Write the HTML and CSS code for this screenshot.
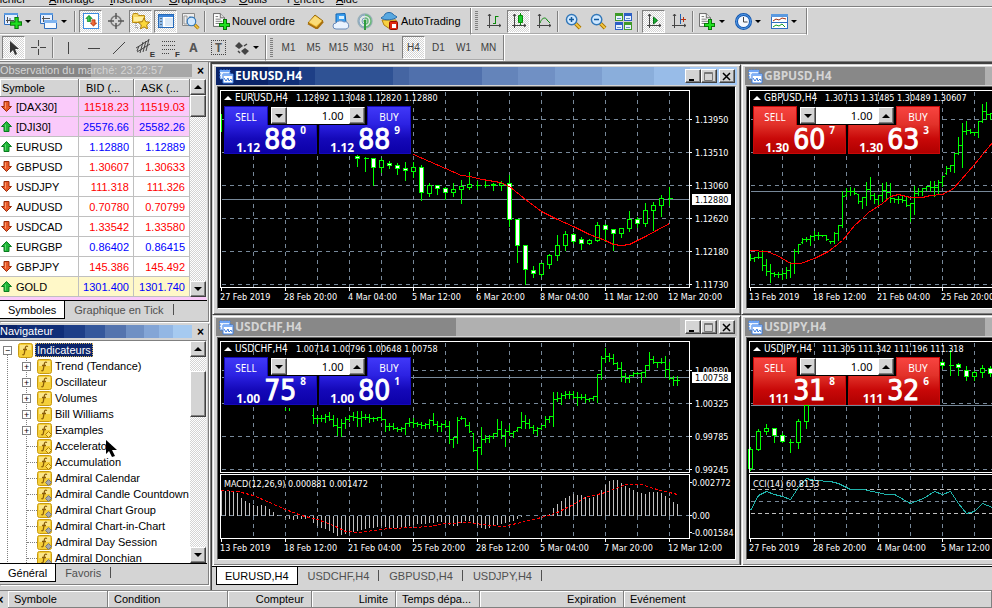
FILE: index.html
```html
<!DOCTYPE html>
<html lang="fr">
<head>
<meta charset="utf-8">
<title>EURUSD,H4</title>
<link rel="stylesheet" href="styles.css">
</head>
<body>
<svg class="sprite" aria-hidden="true">
  <symbol id="i-plus" viewBox="0 0 11 11"><path d="M4 0h4v4h3v4H8v3H4V8H0V4h4z" fill="#087a08"/><path d="M5 1h2v4h3v2H7v3H5V7H1V5h4z" fill="#20e020"/></symbol>
  <symbol id="i-page" viewBox="0 0 14 16"><path d="M.5.5h8l5 5v10H.5z" fill="#fff" stroke="#555"/><path d="M8.500.5v5h5" fill="#ddd" stroke="#555"/><path d="M3 4h3M3 7h6M3 9.500h8M3 12h8" stroke="#666"/></symbol>
  <symbol id="i-up" viewBox="0 0 11 11"><path d="M5.500.5l5 5h-2.500v5h-5v-5h-2.500z" fill="#1fb438" stroke="#0b7a20"/><path d="M4.500 3.500v6" stroke="#5fdc72"/></symbol>
  <symbol id="i-down" viewBox="0 0 11 11"><path d="M5.500 10.500l5-5h-2.500v-5h-5v5h-2.500z" fill="#e8592a" stroke="#9a2c08"/><path d="M4.500 1.500v6" stroke="#ff9a6a"/></symbol>
  <symbol id="i-f" viewBox="0 0 15 15"><rect x=".5" y=".5" width="14" height="14" rx="2" fill="#f5cf3a" stroke="#c89a10"/><path d="M2 2h11v5H2z" fill="#fbe588"/><path d="M10 3.500c-2-1-2.500 0-2.800 2L6.300 10.500c-.3 1.500-1 1.500-2 1M5 6.500h4" fill="none" stroke="#8a5c08" stroke-width="1.300"/></symbol>
  <symbol id="i-fy" viewBox="0 0 15 15"><use href="#i-f"/><path d="M11.500 8.500l3 3-3 3-3-3z" fill="#ffe36a" stroke="#b07c00"/></symbol>
  <symbol id="i-fg" viewBox="0 0 15 15"><use href="#i-f"/><path d="M11.500 8.500l3 3-3 3-3-3z" fill="#a8a8a8" stroke="#777"/></symbol>
  <symbol id="i-win" viewBox="0 0 15 15"><path d="M1 1h10v9H1z" fill="#e8f2ff" stroke="#3b7de0" stroke-dasharray="2 1"/><path d="M1 1h10v2H1z" fill="#6fa5f5"/><path d="M4 5h10v9H4z" fill="#fff" stroke="#3b7de0"/><path d="M4 5h10v2H4z" fill="#7fb0f8"/><path d="M5 9l2 3 2-3 1 3 2-2 1 2" fill="none" stroke="#3b7de0"/></symbol>
  <symbol id="i-axes" viewBox="0 0 16 16"><path d="M3.500 1v14M1 12.500h14M2 3l1.500-2L5 3M13 11l2 1.500-2 1.500" fill="none" stroke="#444"/></symbol>
  <symbol id="i-lens" viewBox="0 0 18 18"><path d="M11 11l5 5" stroke="#a87400" stroke-width="4"/><path d="M11 11l5 5" stroke="#f5c842" stroke-width="2"/><circle cx="7" cy="7" r="5.500" fill="#cfe8ff" stroke="#3277b8" stroke-width="1.500"/></symbol>
</svg>

<div class="app">
  <nav class="menubar" aria-label="Menu">
    <a href="#" class="m1"><u>F</u>ichier</a><a href="#" class="m2"><u>A</u>ffichage</a><a href="#" class="m3"><u>I</u>nsertion</a><a href="#" class="m4"><u>G</u>raphiques</a><a href="#" class="m5"><u>O</u>utils</a><a href="#" class="m6">F<u>e</u>nêtre</a><a href="#" class="m7"><u>A</u>ide</a>
  </nav>

  <div class="toolbar-row">
    <div class="toolbar">
      <button class="tb drop" aria-label="Nouveau graphique"><svg width="18" height="16"><path d="M.5.500h13v11H.5z" fill="#e6f0ff" stroke="#2f6fc0"/><path d="M0 0h14v2H0z" fill="#5b9ae0"/><path d="M3.500 4v6M2 7.500h8M6 5v3" fill="none" stroke="#555"/><use href="#i-plus" x="6" y="4" width="12" height="12"/></svg><i class="caret"></i></button>
      <button class="tb drop" aria-label="Profils"><svg width="18" height="17"><path d="M.5.500h12v10H.5z" fill="#e6f0ff" stroke="#2f6fc0"/><path d="M0 0h13v2H0z" fill="#5b9ae0"/><path d="M3.500 3v6M2 5.500h8" stroke="#555"/><path d="M4.500 7.500h12v8h-12z" fill="#f4f9ff" stroke="#2f6fc0"/><path d="M4 7h13v3H4z" fill="#7fb4f0"/></svg><i class="caret"></i></button>
      <span class="sep"></span>
      <button class="tb on" aria-label="Observation du marché"><svg width="16" height="16"><rect x=".5" y=".5" width="15" height="15" fill="#fff" stroke="#3d8be0"/><use href="#i-up" x="2" y="2" width="8" height="7"/><use href="#i-down" x="7" y="6" width="7" height="8"/></svg></button>
      <button class="tb" aria-label="Fenêtre de données"><svg width="16" height="16"><circle cx="8" cy="8" r="5" fill="none" stroke="#777" stroke-width="1.500"/><path d="M8 0v6M8 10v6M0 8h6M10 8h6" stroke="#555" stroke-width="1.500"/></svg></button>
      <button class="tb on" aria-label="Navigateur"><svg width="18" height="16"><path d="M.5 9.500v-7l1-2h4l1 2h6v7z" fill="#f7d860" stroke="#b88a10"/><path d="M2 4h9v4H2z" fill="#ffefa0"/><path d="M4 10v5h3" fill="none" stroke="#666" stroke-dasharray="1 1"/><path d="M12 5l1.700 3.700 4 .5-3 2.700.8 4-3.500-2-3.500 2 .8-4-3-2.700 4-.5z" fill="#fcd838" stroke="#a87808"/></svg></button>
      <button class="tb on" aria-label="Terminal"><svg width="16" height="16"><rect x=".5" y="1.500" width="15" height="13" fill="#fff" stroke="#2569b8"/><path d="M1 2h4v12H1z" fill="#8db9e8"/><path d="M1 2h14v2H1z" fill="#3b83d8"/><path d="M7 6h8M7 8h8M7 10h8M7 12h8" stroke="#b8d4f0"/><path d="M3 5v9" stroke="#222" stroke-dasharray="1 2"/></svg></button>
      <button class="tb" aria-label="Testeur de stratégie"><svg width="18" height="18"><path d="M.5 1.500h12v12H.5z" fill="#eee" stroke="#888"/><path d="M2 4h3v8H2zM8 4v8M10 6v5" fill="none" stroke="#999"/><use href="#i-lens" x="4" y="4" width="14" height="14"/></svg></button>
      <span class="sep"></span>
      <button class="tb text order"><svg width="17" height="17"><use href="#i-page" x="0" y="0" width="12" height="14"/><use href="#i-plus" x="6" y="6" width="11" height="11"/></svg>Nouvel ordre</button>
      <button class="tb" aria-label="MetaEditor"><svg width="17" height="15"><path d="M1 9l7-8 8 6-6 8z" fill="#f0b828" stroke="#986808"/><path d="M2 8l6-6 7 5-6 5z" fill="#fbdc78"/><path d="M1 9.500l9 5 6-7" fill="none" stroke="#a87010" stroke-width="2"/></svg></button>
      <button class="tb" aria-label="Hébergement"><svg width="18" height="17"><path d="M4 1l9-.5 1 9H4z" fill="#3b9ff0" stroke="#1264b0"/><path d="M7 3h5v3H7z" fill="#d8f0ff"/><path d="M4 16a3 3 0 010-6 5 4 0 018-1 3.500 3.500 0 012 7z" fill="#eaf3ff" stroke="#6a8ab8"/></svg></button>
      <button class="tb" aria-label="Signaux"><svg width="17" height="17"><circle cx="8" cy="8" r="7" fill="#dfe8e4" stroke="#98b0b8" stroke-width="1.500"/><path d="M8 2a6 6 0 000 12M8 5a3 3 0 000 6" fill="none" stroke="#7b9cc0"/><path d="M8 2a6 6 0 010 12M8 5a3 3 0 010 6" fill="none" stroke="#68b878" stroke-width="1.500"/><path d="M8 8v9" stroke="#2f9c40" stroke-width="2"/><circle cx="8" cy="8" r="1.500" fill="#2f9c40"/></svg></button>
      <button class="tb text auto"><svg width="18" height="18"><path d="M1 8h14l1 4-7 5-6-4z" fill="#f8d040" stroke="#b08010"/><path d="M0 6c2-2 3-1 4-4 2-2 6-2 8 0 1 2 2 1 4 3-3 3-12 4-16 1z" fill="#58a8e0" stroke="#2a6ca8"/><rect x="8.500" y="9.500" width="8" height="8" rx="1" fill="#e02810" stroke="#901000"/><path d="M11 12h4v4h-4z" fill="#fff"/></svg>AutoTrading</button>
    </div>
    <div class="toolbar">
      <span class="grip"></span>
      <button class="tb" aria-label="Barres"><svg width="16" height="16"><use href="#i-axes" width="16" height="16"/><path d="M9.500 3v8M9.500 3.500h3M7 10.500h3" stroke="#0a8a0a"/></svg></button>
      <button class="tb on" aria-label="Chandeliers"><svg width="16" height="16"><use href="#i-axes" width="16" height="16"/><path d="M9.500 0v12" stroke="#0a8a0a"/><path d="M7.500 2.500h4v7h-4z" fill="#18d030" stroke="#0a8a0a"/></svg></button>
      <button class="tb" aria-label="Ligne"><svg width="16" height="16"><use href="#i-axes" width="16" height="16"/><path d="M4 10c2-6 6-6 7-3l3 3" fill="none" stroke="#0a8a0a"/></svg></button>
      <span class="sep"></span>
      <button class="tb" aria-label="Zoom avant"><svg width="17" height="17"><use href="#i-lens" width="17" height="17"/><path d="M4 6.500h5M6.500 4v5" stroke="#125a9c" stroke-width="1.500"/></svg></button>
      <button class="tb" aria-label="Zoom arrière"><svg width="17" height="17"><use href="#i-lens" width="17" height="17"/><path d="M4 6.500h5" stroke="#125a9c" stroke-width="1.500"/></svg></button>
      <button class="tb" aria-label="Mosaïque"><svg width="17" height="17"><path d="M0 0h8v8H0zM9 9h8v8H9z" fill="#3e9a28"/><path d="M9 0h8v8H9zM0 9h8v8H0z" fill="#2c5fc4"/><path d="M1 3h6v4H1zM10 3h6v4h-6zM1 12h6v4H1zM10 12h6v4h-6z" fill="#e8f2ff"/><path d="M2 5.500h4M11 5.500h4M2 14.500h4M11 14.500h4" stroke="#6a94c8"/></svg></button>
      <span class="sep"></span>
      <button class="tb on" aria-label="Défilement"><svg width="16" height="16"><use href="#i-axes" width="16" height="16"/><path d="M7.500 4l4 3.500-4 3.500z" fill="#18b030" stroke="#087018"/></svg></button>
      <button class="tb" aria-label="Décalage"><svg width="16" height="16"><use href="#i-axes" width="16" height="16"/><path d="M9.500 1v10" stroke="#2060b0"/><path d="M10 6.500h5M12.500 4v5" stroke="#b83010"/></svg></button>
      <span class="sep"></span>
      <button class="tb drop" aria-label="Indicateurs"><svg width="17" height="17"><use href="#i-page" x="0" y="0" width="12" height="14"/><use href="#i-plus" x="5" y="6" width="11" height="11"/></svg><i class="caret"></i></button>
      <button class="tb drop" aria-label="Périodes"><svg width="17" height="17"><circle cx="8.500" cy="8.500" r="7" fill="#f4f8ff" stroke="#1458b0" stroke-width="3"/><circle cx="8.500" cy="8.500" r="7" fill="none" stroke="#5aa0ec"/><path d="M8.500 4v5h4" fill="none" stroke="#444"/></svg><i class="caret"></i></button>
      <button class="tb drop" aria-label="Modèles"><svg width="17" height="15"><rect x=".5" y=".5" width="16" height="14" fill="#fff" stroke="#2f6fc0"/><path d="M0 0h17v3H0z" fill="#5b9ae0"/><path d="M0 8.500h17" stroke="#2f6fc0"/><path d="M2 7l3-2 3 1 3-2 4 1" fill="none" stroke="#a03010"/><path d="M2 13l3-2 3 1 3-2 3 3" fill="none" stroke="#18a028"/></svg><i class="caret"></i></button>
    </div>
  </div>

  <div class="toolbar-row">
    <div class="toolbar tools">
      <button class="tb on" aria-label="Curseur"><svg width="12" height="16"><path d="M2 1v12l3-3 2 5 2-1-2-5h4z" fill="#333"/></svg></button>
      <button class="tb" aria-label="Réticule"><svg width="16" height="16"><path d="M7.500 0v6M7.500 9v6M0 7.500h6M9 7.500h6" stroke="#444"/></svg></button>
      <span class="sep"></span>
      <button class="tb" aria-label="Ligne verticale"><svg width="14" height="14"><path d="M6.500 1v12" stroke="#444"/></svg></button>
      <button class="tb" aria-label="Ligne horizontale"><svg width="14" height="14"><path d="M1 7.500h12" stroke="#444"/></svg></button>
      <button class="tb" aria-label="Ligne de tendance"><svg width="14" height="14"><path d="M1 13L13 1" stroke="#444"/></svg></button>
      <button class="tb mark" aria-label="Canal équidistant"><svg width="16" height="18"><path d="M0 9l13-8M1 13l13-8M4 14L7 3M7 13l3-11M10 12l3-12M1 12l2-5" stroke="#444"/></svg><b>E</b></button>
      <button class="tb mark" aria-label="Fibonacci"><svg width="16" height="18"><path d="M1 2.500h14M1 6.500h14M1 10.500h14M1 14.500h8" stroke="#444" stroke-dasharray="1 1"/></svg><b>F</b></button>
      <button class="tb letter">A</button>
      <button class="tb label">T</button>
      <button class="tb drop" aria-label="Flèches"><svg width="16" height="16"><path d="M5 2l4 4-4 3-4-3zM11 8l4 3-4 4-4-4z" fill="#444"/><path d="M4 11l2 2M10 6l3-2" fill="none" stroke="#444" stroke-width="1.500"/></svg><i class="caret"></i></button>
    </div>
    <div class="toolbar periods">
      <span class="grip"></span>
      <button class="tb">M1</button><button class="tb">M5</button><button class="tb">M15</button><button class="tb">M30</button><button class="tb">H1</button><button class="tb on">H4</button><button class="tb">D1</button><button class="tb">W1</button><button class="tb">MN</button>
    </div>
  </div>

  <div class="workspace">
    <aside class="sidebar">
      <section class="panel market">
        <header class="panel-title idle"><h2>Observation du marché: 23:22:57</h2><button class="close" aria-label="Fermer">×</button></header>
        <div class="scroll-area">
          <table>
            <thead><tr><th>Symbole</th><th class="num">BID (...</th><th class="num">ASK (...</th></tr></thead>
            <tbody>
              <tr class="pink down"><td><svg><use href="#i-down"/></svg>[DAX30]</td><td>11518.23</td><td>11519.03</td></tr>
              <tr class="pink up"><td><svg><use href="#i-up"/></svg>[DJI30]</td><td>25576.66</td><td>25582.26</td></tr>
              <tr class="up"><td><svg><use href="#i-up"/></svg>EURUSD</td><td>1.12880</td><td>1.12889</td></tr>
              <tr class="down"><td><svg><use href="#i-down"/></svg>GBPUSD</td><td>1.30607</td><td>1.30633</td></tr>
              <tr class="down"><td><svg><use href="#i-down"/></svg>USDJPY</td><td>111.318</td><td>111.326</td></tr>
              <tr class="down"><td><svg><use href="#i-down"/></svg>AUDUSD</td><td>0.70780</td><td>0.70799</td></tr>
              <tr class="down"><td><svg><use href="#i-down"/></svg>USDCAD</td><td>1.33542</td><td>1.33580</td></tr>
              <tr class="up"><td><svg><use href="#i-up"/></svg>EURGBP</td><td>0.86402</td><td>0.86415</td></tr>
              <tr class="down"><td><svg><use href="#i-down"/></svg>GBPJPY</td><td>145.386</td><td>145.492</td></tr>
              <tr class="gold up"><td><svg><use href="#i-up"/></svg>GOLD</td><td>1301.400</td><td>1301.740</td></tr>
            </tbody>
          </table>
          <div class="scrollbar"><button aria-label="Haut"><i class="tri up"></i></button><span class="thumb"></span><button class="end" aria-label="Bas"><i class="tri"></i></button></div>
        </div>
        <div class="tabs"><button class="tab on">Symboles</button><button class="tab">Graphique en Tick</button></div>
      </section>

      <section class="panel navigator">
        <header class="panel-title live"><h2>Navigateur</h2><button class="close" aria-label="Fermer">×</button></header>
        <div class="scroll-area">
          <ul class="tree">
            <li class="root"><i class="box">−</i><svg><use href="#i-f"/></svg><span class="sel">Indicateurs</span></li>
            <li><i class="box">+</i><svg><use href="#i-f"/></svg>Trend (Tendance)</li>
            <li><i class="box">+</i><svg><use href="#i-f"/></svg>Oscillateur</li>
            <li><i class="box">+</i><svg><use href="#i-f"/></svg>Volumes</li>
            <li><i class="box">+</i><svg><use href="#i-f"/></svg>Bill Williams</li>
            <li><i class="box">+</i><svg><use href="#i-fy"/></svg>Examples</li>
            <li><i class="leaf"></i><svg><use href="#i-fy"/></svg>Accelerator<svg class="pointer" viewBox="0 0 11 17"><path d="M0 0v14l3-3 3 6 3-1-3-6h5z"/></svg></li>
            <li><i class="leaf"></i><svg><use href="#i-fy"/></svg>Accumulation</li>
            <li><i class="leaf"></i><svg><use href="#i-fg"/></svg>Admiral Calendar</li>
            <li><i class="leaf"></i><svg><use href="#i-fg"/></svg>Admiral Candle Countdown</li>
            <li><i class="leaf"></i><svg><use href="#i-fg"/></svg>Admiral Chart Group</li>
            <li><i class="leaf"></i><svg><use href="#i-fg"/></svg>Admiral Chart-in-Chart</li>
            <li><i class="leaf"></i><svg><use href="#i-fg"/></svg>Admiral Day Session</li>
            <li><i class="leaf"></i><svg><use href="#i-fg"/></svg>Admiral Donchian</li>
          </ul>
          <div class="scrollbar"><button aria-label="Haut"><i class="tri up"></i></button><span class="thumb low"></span><button class="end" aria-label="Bas"><i class="tri"></i></button></div>
        </div>
        <div class="tabs"><button class="tab on">Général</button><button class="tab">Favoris</button></div>
      </section>
    </aside>

    <main class="desk">
      <div class="mdi" id="mdi"></div>
      <div class="tabs chart-tabs"><button class="tab on">EURUSD,H4</button><button class="tab">USDCHF,H4</button><button class="tab">GBPUSD,H4</button><button class="tab">USDJPY,H4</button></div>
    </main>
  </div>

  <div class="terminal">
    <button class="close" aria-label="Fermer">×</button>
    <table><thead><tr><th class="c1">Symbole</th><th class="c2">Condition</th><th class="c3 num">Compteur</th><th class="c4 num">Limite</th><th class="c5">Temps dépa...</th><th class="c6 num">Expiration</th><th>Evénement</th></tr></thead></table>
  </div>
</div>
<script src="charts.js"></script>
</body>
</html>
```

FILE: styles.css
```css
:root {
  --face: #d4d4d4;
  --shade: #808080;
  --dark: #404040;
  --dither: repeating-conic-gradient(#fff 0 25%, #d4d4d4 0 50%) 0 0 / 2px 2px;
  --ui: "Liberation Sans", sans-serif;
  --wide: "Noto Sans", "DejaVu Sans Condensed", sans-serif;
}
* { box-sizing: border-box; }
body { margin: 0; background: var(--face); color: #000; font: 11px/14px var(--ui); overflow: hidden; }
button { font: inherit; color: inherit; background: none; border: 0; padding: 0; margin: 0; }
.sprite { position: absolute; width: 0; height: 0; }
.app { height: 100vh; display: flex; flex-direction: column; }

.menubar { height: 8px; flex: none; overflow: hidden; display: flex; align-items: flex-end; padding-bottom: 1px; border-bottom: 1px solid #fff; box-shadow: inset 0 -1px var(--shade); }
.menubar a { color: #000; text-decoration: none; flex: none; }
.menubar .m1 { width: 56px; margin-left: -7px; }
.menubar .m2 { width: 61px; }
.menubar .m3 { width: 59px; }
.menubar .m4 { width: 70px; }
.menubar .m5 { width: 48px; }
.menubar .m6 { width: 49px; }

.toolbar-row { display: flex; height: 27px; flex: none; }
.toolbar-row + .toolbar-row { height: 26px; }
.toolbar { display: flex; align-items: center; gap: 2px; padding: 0 3px 0 2px; border-right: 1px solid var(--shade); border-bottom: 1px solid #fff; box-shadow: 1px 0 #fff, inset 0 -1px #aaa; }
.toolbar + .toolbar { padding-left: 4px; }
.tb { width: 23px; height: 23px; display: flex; align-items: center; justify-content: center; flex: none; }
.tb.on { background: var(--dither); border: 1px solid; border-color: var(--shade) #fff #fff var(--shade); }
.tb.drop { width: 34px; justify-content: flex-start; padding-left: 2px; gap: 3px; }
.tools .tb.drop { width: 30px; }
.tb.text { width: auto; gap: 2px; padding: 0 2px; white-space: nowrap; }
.tb.order { width: 93px; padding-left: 4px; justify-content: flex-start; }
.tb.auto { width: 88px; justify-content: flex-start; }
.caret { border: 3px solid transparent; border-top-color: #000; border-bottom: 0; }
.sep { width: 1px; height: 21px; background: var(--shade); margin-right: 2px; box-shadow: 1px 0 #eee; }
.grip { width: 3px; height: 20px; margin-right: 2px; background: repeating-linear-gradient(#808080 0 1px, #d4d4d4 1px 2px); }
.mark { position: relative; }
.mark b { position: absolute; right: 0; bottom: 0; font: bold 8px/8px var(--ui); color: #333; }
.letter { font: bold 12px/14px var(--wide); color: #555; }
.tb.label { font: bold 12px/14px var(--wide); color: #555; width: 15px; height: 15px; border: 1px dotted #444; margin: 0 4px; }
.periods { font-size: 10px; color: #404040; }

.workspace { flex: 1; min-height: 0; display: flex; border-top: 1px solid var(--shade); }
.sidebar { width: 211px; flex: none; display: flex; flex-direction: column; border-right: 1px solid var(--shade); padding-right: 1px; }
.panel { display: flex; flex-direction: column; padding: 1px 1px 0 0; border-right: 1px solid var(--shade); border-bottom: 1px solid var(--shade); box-shadow: 1px 1px #fff; }
.market { padding-top: 2px; padding-bottom: 2px; }
.navigator { flex: 1; min-height: 0; margin: 2px 0 5px; padding-bottom: 2px; }
.panel-title { display: flex; height: 13px; margin-bottom: 2px; flex: none; }
.panel-title h2 { margin: 0; flex: 1; font: 11px/13px var(--ui); white-space: nowrap; margin-left: -2px; padding-left: 2px; }
.idle h2 { color: #d4d4d4; background: linear-gradient(90deg, #858585 0 48%, #a8a8a8 0); }
.live h2 { color: #fff; background: linear-gradient(90deg, #0a246a 0 10%, #0f2e78 10% 34%, #1e3f88 34% 45%, #35589c 45% 55%, #5474ae 55% 66%, #6f90c4 66% 75%, #83a5d6 75% 83%, #93b7e4 83% 90%, #a6caf0 90%); }
.close { font: bold 12px/12px var(--ui); width: 13px; }
.panel-title .close { margin-left: 2px; }
.scroll-area { display: flex; background: #fff; border-right: 1px solid #eee; }
.market table { flex: 1; border-collapse: separate; border-spacing: 0; table-layout: fixed; width: 190px; }
th { font-weight: normal; text-align: left; background: var(--face); border-right: 1px solid var(--shade); border-bottom: 1px solid var(--shade); box-shadow: inset 1px 1px #fff; white-space: nowrap; overflow: hidden; }
.market th { height: 18px; padding: 0 2px; }
.market th:first-child { width: 79px; }
.market th:nth-child(2) { width: 55px; }
.market th.num { padding-left: 7px; }
.market td { height: 20px; padding: 0 4px 0 0; text-align: right; border-right: 1px solid #c0c0c0; border-bottom: 1px solid #c0c0c0; }
.market td:first-child { text-align: left; padding-left: 1px; color: #000; }
.market td svg { width: 11px; height: 11px; margin-right: 4px; vertical-align: -1px; }
.up td { color: #00f; }
.down td { color: #f00; }
.pink td { background: #facafa; }
.gold td { background: #fff8c8; }
.market .scroll-area { border-bottom: 3px solid #facafa; }
.scrollbar { width: 16px; flex: none; display: flex; flex-direction: column; background: var(--dither); }
.scrollbar button, .thumb, .spin button, .caption button { background: var(--face); border: 1px solid; border-color: #fff var(--dark) var(--dark) #fff; box-shadow: inset -1px -1px var(--shade); }
.scrollbar button { height: 16px; display: flex; align-items: center; justify-content: center; }
.scrollbar .end { margin-top: auto; }
.thumb { height: 22px; }
.thumb.low { height: 46px; margin-top: 14px; }
.tri { border: 4px solid transparent; border-top-color: #000; border-bottom: 0; }
.tri.up { border: 4px solid transparent; border-bottom-color: #000; border-top: 0; }
.tabs { display: flex; height: 19px; flex: none; border-top: 1px solid #000; }
.tab { color: #505050; padding: 0 10px 0 9px; white-space: nowrap; position: relative; }
.tab:not(.on)::after { content: ""; position: absolute; right: 0; top: 3px; height: 11px; width: 1px; background: #505050; }
.tab.on { color: #000; background: #fff; border: 1px solid #000; border-top: 0; border-left: 0; padding: 0 8px; }

.navigator .scroll-area { flex: 1; min-height: 0; border-top: 1px solid var(--shade); overflow: hidden; }
.tree { flex: 1; margin: 0; padding: 1px 0 0; list-style: none; background: repeating-linear-gradient(#808080 0 1px, #fff 1px 2px) 7px 8px / 1px 100% no-repeat; min-width: 0; overflow: hidden; }
.tree li { height: 16px; display: flex; align-items: center; padding-left: 22px; white-space: nowrap; background: repeating-linear-gradient(#808080 0 1px, #fff 1px 2px) 26px 0 / 1px 100% no-repeat; position: relative; }
.tree li.root { padding-left: 3px; background: none; }
.tree li svg { width: 15px; height: 15px; margin-right: 3px; flex: none; }
.tree .root svg { margin-right: 2px; }
.box, .leaf { flex: none; }
.box { width: 9px; height: 9px; border: 1px solid var(--shade); background: #fff; font: normal 9px/7px var(--wide); text-align: center; margin-right: 6px; }
.leaf { width: 10px; margin: 0 0 0 5px; border-top: 1px dotted var(--shade); }
.sel { background: #0a246a; color: #fff; outline: 1px dotted #d8b860; outline-offset: -1px; padding: 0 2px; line-height: 14px; }
.tree li .pointer { position: absolute; left: 106px; top: 2px; width: 11px; height: 17px; }
.tree li:has(.pointer) { z-index: 2; }

.desk { flex: 1; min-width: 0; display: flex; flex-direction: column; border-left: 1px solid var(--dark); }
.mdi { flex: 1; min-height: 0; overflow: hidden; display: grid; grid-template-columns: max-content max-content; align-content: start; border-top: 2px solid var(--dark); border-bottom: 1px solid #fff; }
.chart-window { border: 1px solid; border-color: var(--face) var(--dark) var(--dark) var(--face); box-shadow: inset 1px 1px #fff, inset -1px -1px var(--shade); padding: 2px 3px 5px; background: var(--face); }
.caption { height: 18px; display: flex; align-items: center; gap: 1px; margin-bottom: 1px; padding: 0 2px 0 3px; background: linear-gradient(90deg, #888 0 46%, #b0b0b0 46% 89%, #c0c0c0 89%); color: #d4d4d4; }
.caption.active { color: #fff; background: linear-gradient(90deg, #0a246a 0 10%, #102f78 10% 16%, #1e3f86 16% 19%, #2f5294 19% 34%, #4565a2 34% 37%, #5070ac 37% 51%, #6484ba 51% 58%, #7090c4 58% 65%, #7c9ecf 65% 74%, #8aaedb 74% 84%, #98bce8 84% 91%, #a6caf4 91%); }
.caption svg { width: 15px; height: 15px; }
.caption h3 { margin: 0; font: bold 12px/16px var(--wide); flex: 1; }
.caption button { width: 16px; height: 14px; display: flex; align-items: center; justify-content: center; }
.caption button + button { margin-left: -1px; }
.caption button.x { margin-left: 1px; }
.caption button svg { width: 10px; height: 9px; }
.chart-frame { position: relative; border: 1px solid; border-color: #606060 #fff #fff #606060; margin: 0 1px; background: #000; }
.chart { display: block; width: 517px; height: 221px; font: 9px/10px "DejaVu Sans Condensed", var(--wide); fill: #fff; }
.chart .name { font-size: 10px; }
.chart .lines { shape-rendering: crispEdges; fill: none; }
.grid { stroke: #778899; stroke-dasharray: 4 4; }
.level { stroke: #c0c0c0; stroke-dasharray: 4 3; }
.price { stroke: #778899; }
.frame { stroke: #fff; }
.bar { stroke: #0f0; }
.hollow { stroke: #0f0; fill: #000; }
.solid { stroke: #0f0; fill: #fff; }
.ma { stroke: #f00; }
.signal { stroke: #f00; stroke-dasharray: 3 2; }
.hist { stroke: #c0c0c0; }
.cci { stroke: #20b2aa; }
.tag { fill: #fff; }
.chart .tag-text { fill: #000; }

.trade { position: absolute; left: 6px; top: 19px; width: 187px; height: 48px; display: grid; grid-template-columns: 93px 92px; grid-template-rows: 19px 29px; column-gap: 2px; background: #000; color: #fff; }
.trade.blue { --lit: #4038f8; --mid: #2a20e0; --deep: #0c00a8; --rim: #1408b8; }
.trade.red { --lit: #f84440; --mid: #e03028; --deep: #b00000; --rim: #c80808; }
.trade-top { grid-column: 1 / 3; display: flex; justify-content: space-between; }
.side { width: 44px; height: 20px; background: linear-gradient(var(--lit), var(--mid)); border: 1px solid var(--rim); border-bottom: 0; font: 10px/20px var(--wide); }
.spin { display: flex; width: 94px; height: 17px; margin-top: 1px; background: #fff; }
.spin button { width: 16px; flex: none; display: flex; align-items: center; justify-content: center; }
.spin input { flex: 1; min-width: 0; border: 0; padding: 0 5px 0 0; margin: 0; text-align: right; font: 11px/15px var(--wide); background: #fff; }
.quote { display: flex; align-items: flex-end; justify-content: flex-end; background: linear-gradient(var(--mid), var(--rim) 50%, var(--deep)); border: 1px solid var(--rim); border-top: 0; font: bold 12px/10px var(--wide); gap: 4px; padding: 0 10px 0 0; }
.quote strong { font: 28px/26px "DejaVu Sans Condensed", var(--wide); -webkit-text-stroke: 1px #fff; }
.quote sup { font: bold 10px/10px var(--wide); align-self: flex-start; }

.chart-tabs { height: 24px; padding-left: 4px; }
.chart-tabs .tab { height: 18px; padding: 0 10px; }
.chart-tabs .tab.on { border-left: 1px solid #000; padding: 0 8px; }

.terminal { display: flex; height: 18px; flex: none; border-top: 1px solid var(--shade); overflow: hidden; }
.terminal .close { width: 8px; margin-left: -4px; margin-right: 4px; flex: none; }
.terminal table { flex: 1; table-layout: fixed; border-collapse: separate; border-spacing: 0; width: 100%; }
.terminal th { height: 17px; padding: 0 7px 0 6px; }
.terminal th.num { text-align: right; }
.c1 { width: 100px; } .c2 { width: 120px; } .c3 { width: 84px; } .c4 { width: 84px; } .c5 { width: 84px; } .c6 { width: 144px; }
```

FILE: charts.js
```js
// Coordinates are relative to the top-left corner of each plot frame.
const DATES_A = ['27 Feb 2019', '28 Feb 20:00', '4 Mar 04:00', '5 Mar 12:00', '6 Mar 20:00', '8 Mar 04:00', '11 Mar 12:00', '12 Mar 20:00'];
const DATES_B = ['13 Feb 2019', '18 Feb 12:00', '21 Feb 04:00', '25 Feb 20:00', '28 Feb 12:00', '5 Mar 04:00', '7 Mar 20:00', '12 Mar 12:00'];

const charts = [
  {
    name: 'EURUSD,H4', ohlc: '1.12892 1.13048 1.12820 1.12880', active: true, full: true, color: 'blue',
    bid: ['1.12', '88', '0'], ask: ['1.12', '88', '9'], dates: DATES_A, price: 109,
    scale: [[29, '1.13950'], [62, '1.13510'], [95, '1.13060'], [128, '1.12620'], [161, '1.12180'], [194, '1.11730']],
    tag: '1.12880', extra: [[1, 23, 41]],
    // x, high, body top, body bottom, low, 1 = filled
    candles: [[137,64,66,68,75,1],[145,66,68,68,80,1],[153,68,68,77,94,1],[161,67,70,77,81,0],[169,70,73,75,77,1],[177,72,75,78,83,1],[185,71,78,80,89,1],[193,71,77,81,86,0],[201,74,77,102,109,1],[209,92,95,103,105,0],[217,94,95,98,103,1],[225,96,98,102,108,1],[233,92,99,102,105,0],[241,89,96,99,112,0],[249,81,94,97,98,0],[257,90,95,95,98,0],[265,88,95,95,96,0],[273,92,94,95,99,0],[281,90,93,95,99,0],[289,84,93,129,135,1],[297,129,129,155,171,1],[305,155,155,179,193,1],[313,175,180,183,186,1],[321,173,173,184,185,0],[329,163,165,174,177,0],[337,144,155,165,169,0],[345,140,144,155,159,0],[353,142,144,151,152,1],[361,146,149,153,158,1],[369,148,150,153,153,0],[377,131,135,150,150,0],[385,133,135,139,150,1],[393,138,139,143,159,1],[401,137,138,143,146,0],[409,120,129,138,140,0],[417,126,129,133,136,1],[425,112,120,133,135,0],[433,111,115,120,139,0],[441,104,108,115,125,0],[449,96,108,108,114,0]],
    ma: '193,64 209,71 225,78 241,85 249,86 262,89 280,92 289,96 305,109 321,121 337,129 353,136 369,144 385,150 393,154 401,155 409,154 425,146 449,133'
  },
  {
    name: 'GBPUSD,H4', ohlc: '1.30713 1.31485 1.30489 1.30607', color: 'red',
    bid: ['1.30', '60', '7'], ask: ['1.30', '63', '3'], dates: DATES_B.slice(0, 4), price: 101, scale: [29, 62, 95, 128, 161, 194].map(y => [y, '']),
    barStart: 0,
    bars: [[163,170],[166,171],[161,168],[159,180],[168,185],[173,192],[181,186],[181,187],[179,189],[176,188],[171,187],[158,183],[153,163],[147,153],[146,151],[144,155],[140,150],[141,149],[144,146],[144,150],[150,153],[141,153],[134,150],[100,137],[97,106],[96,105],[97,104],[103,113],[106,118],[91,115],[86,109],[102,113],[104,116],[92,111],[91,109],[92,112],[107,112],[105,113],[105,112],[105,116],[112,131],[95,124],[97,105],[97,105],[95,100],[90,101],[90,106],[89,104],[85,96],[75,84],[74,81],[62,82],[46,64],[32,77],[30,44],[38,43],[41,45],[30,47],[13,32],[11,29],[22,29],[9,30]],
    ma: '1,160 17,161 28,165 41,173 51,173 65,168 79,161 93,150 105,135 113,128 119,122 133,113 141,106 149,104 161,107 173,107 181,105 193,104 204,98 218,82 225,74 243,52'
  },
  {
    name: 'USDCHF,H4', ohlc: '1.00714 1.00796 1.00648 1.00758', full: true, color: 'blue', split: true,
    bid: ['1.00', '75', '8'], ask: ['1.00', '80', '1'], dates: DATES_B, price: 36,
    scale: [[29, '1.00880'], [62, '1.00325'], [95, '0.99785'], [128, '0.99245']],
    subScale: [[141, '0.002772'], [174, '0.00'], [191, '-0.001584']],
    tag: '1.00758', sub: 'MACD(12,26,9) 0.000881 0.001472', extra: [[0, 26, 34], [65, 66, 69], [69, 66, 69]],
    barStart: 23,
    bars: [[66,82],[74,82],[73,80],[72,81],[70,79],[73,85],[76,94],[77,95],[75,87],[73,80],[70,79],[69,85],[69,85],[72,78],[72,81],[75,80],[75,79],[67,79],[77,90],[81,89],[81,88],[85,90],[85,90],[81,93],[76,85],[76,86],[80,85],[80,87],[81,87],[77,87],[71,84],[79,90],[81,90],[78,86],[79,102],[95,106],[75,102],[74,78],[76,85],[80,91],[91,110],[105,128],[85,113],[93,101],[93,101],[91,97],[77,95],[79,97],[87,105],[83,94],[89,96],[85,90],[70,87],[73,87],[77,87],[83,92],[85,94],[83,88],[74,86],[74,81],[50,85],[50,60],[51,63],[49,57],[49,57],[49,57],[50,64],[52,58],[52,61],[56,60],[54,59],[32,61],[14,38],[6,21],[11,20],[12,23],[20,28],[20,40],[31,41],[33,41],[30,35],[30,33],[30,41],[23,36],[10,28],[14,22],[20,26],[16,22],[14,36],[20,38],[34,44],[34,44]],
    hist: [149,149,149,150,151,156,159,161,163,164,163,164,167,170,173,174,176,177,178,177,177,177,176,181,184,186,187,189,191,194,193,192,191,190,189,188,187,186,186,185,184,185,186,186,186,186,185,184,183,182,182,182,181,181,180,180,181,183,184,184,181,179,179,181,184,186,187,186,184,183,182,181,180,179,177,175,174,174,174,174,174,173,172,166,162,159,156,154,152,153,153,155,156,155,153,148,143,139,138,138,141,144,146,148,150,151,152,150,150,150,151,154,156,160,162],
    signal: '1,149 17,150 33,154 49,161 65,168 81,174 97,178 113,184 125,190 139,191 153,189 169,187 193,186 209,185 225,182 249,181 262,183 283,185 305,180 321,176 337,171 353,163 365,156 385,151 405,143 421,143 433,147 457,153'
  },
  {
    name: 'USDJPY,H4', ohlc: '111.305 111.342 111.196 111.318', color: 'red', split: true, ohlcX: 73,
    bid: ['111', '31', '8'], ask: ['111', '32', '6'], dates: DATES_A.slice(0, 4), price: 64, scale: [29, 62, 95, 128].map(y => [y, '']),
    sub: 'CCI(14) 60.8133', levels: [148, 172], subGrid: 160,
    candles: [[1,105,108,127,128,0],[9,87,90,108,108,0],[17,82,87,90,92,0],[25,87,87,94,100,1],[33,91,94,100,100,1],[41,97,101,101,110,0],[49,77,80,101,106,0],[57,64,64,80,86,0],[193,19,21,24,26,1],[201,8,24,24,33,0],[209,21,23,26,33,1],[217,24,29,35,38,1],[225,29,31,35,38,0],[233,23,27,31,35,0],[241,24,27,32,34,1]],
    cci: '1,169 9,154 17,150 25,153 33,155 41,158 49,146 57,137 65,139 81,140 89,142 101,148 114,148 137,153 145,153 161,162 174,157 185,150 193,153 201,150 209,162 217,172 225,170 233,162 243,166'
  }
];

const path = (cls, d) => `<path class="${cls}" d="${d}" transform="translate(.5 .5)"/>`;
const line = (cls, pts) => `<polyline class="${cls}" points="${pts}" transform="translate(.5 .5)"/>`;

function barPath(bars, start) {
  const mid = bars.map(([h, l]) => (h + l) / 2);
  let open = mid[0], d = '';
  bars.forEach(([h, l], i) => {
    const x = 1 + 4 * (start + i);
    const next = mid[i + 1] ?? mid[i];
    const close = Math.round(Math.min(l - 1, Math.max(h + 1, (mid[i] + next) / 2 + (next - mid[i]) / 4)));
    open = Math.round(Math.min(l - 1, Math.max(h + 1, open)));
    d += `M${x} ${h}V${l}M${x - 2} ${open}h2M${x} ${close}h2`;
    open = close;
  });
  return d;
}

function drawChart(c) {
  let s = '';
  const bottom = c.split ? 131 : 197;
  let grid = '';
  for (let x = 33; x < 469; x += 32) grid += c.split ? `M${x} 1V130M${x} 134V196` : `M${x} 1V196`;
  c.scale.forEach(([y]) => { grid += `M1 ${y}H468`; });
  if (c.hist) grid += 'M1 174H468';
  if (c.subGrid) grid += `M1 ${c.subGrid}H468`;
  s += path('grid', grid);
  if (c.levels) s += path('level', c.levels.map(y => `M1 ${y}H468`).join(''));
  s += path('price', `M1 ${c.price}H468`);
  if (c.hist) s += path('hist', c.hist.map((y, i) => `M${1 + 4 * i} 174V${y}`).join(''));
  if (c.bars) s += path('bar', barPath(c.bars, c.barStart));
  if (c.candles) c.candles.forEach(([x, h, t, b, l, f]) => {
    s += path('bar', `M${x} ${h}V${l + 1}`);
    s += t === b ? path('bar', `M${x - 2} ${t}h5`) : path(f ? 'solid' : 'hollow', `M${x - 2} ${t}h4V${b}h-4z`);
  });
  if (c.extra) s += path('bar', c.extra.map(([x, a, b]) => `M${x} ${a}V${b}`).join(''));
  if (c.ma) s += line('ma', c.ma);
  if (c.signal) s += line('signal', c.signal);
  if (c.cci) s += line('cci', c.cci);
  let frame = `M0 0H469V${bottom}H0z`;
  if (c.split) frame += 'M0 133H469V197H0z';
  c.dates.forEach((_, i) => { frame += `M${1 + 64 * i} 197v3`; });
  c.scale.forEach(([y]) => { frame += `M469 ${y}h2`; });
  (c.subScale || []).forEach(([y]) => { frame += `M469 ${y}h2`; });
  s += path('frame', frame);

  let t = `<path d="M4 10l4-4 4 4z"/><text class="name" x="15" y="11">${c.name}</text><text x="${c.ohlcX || 76}" y="11">${c.ohlc}</text>`;
  if (c.sub) t += `<text x="4" y="146">${c.sub}</text>`;
  c.dates.forEach((d, i) => { t += `<text x="${64 * i}" y="210">${d}</text>`; });
  c.scale.forEach(([y, v]) => { if (v) t += `<text x="475" y="${y + 4}">${v}</text>`; });
  (c.subScale || []).forEach(([y, v]) => { t += `<text x="472" y="${y + 4}">${v}</text>`; });
  if (c.tag) t += `<rect class="tag" x="472" y="${c.price - 5}" width="39" height="11"/><text class="tag-text" x="475" y="${c.price + 4}">${c.tag}</text>`;
  return `<svg class="chart" viewBox="-2 -3 517 221" role="img" aria-label="${c.name}"><g class="lines">${s}</g>${t}</svg>`;
}

const quote = q => `<div class="quote"><span>${q[0]}</span><strong>${q[1]}</strong><sup>${q[2]}</sup></div>`;
const controls = `<button aria-label="Réduire"><svg><path d="M1 7h5v2H1z"/></svg></button><button aria-label="Agrandir"><svg><path d="M.5.500h8v8h-8zM1 1.500h8" fill="none" stroke="#777"/></svg></button><button class="x" aria-label="Fermer"><svg><path d="M1 1l7 7M8 1l-7 7" stroke="#000" stroke-width="1.500"/></svg></button>`;

document.getElementById('mdi').innerHTML = charts.map(c => `
  <section class="chart-window">
    <header class="caption${c.active ? ' active' : ''}"><svg><use href="#i-win"/></svg><h3>${c.name}</h3>${c.full ? controls : ''}</header>
    <div class="chart-frame">${drawChart(c)}
      <div class="trade ${c.color}">
        <div class="trade-top"><button class="side">SELL</button>
          <div class="spin"><button aria-label="Moins"><i class="tri"></i></button><input value="1.00" aria-label="Volume ${c.name}"><button aria-label="Plus"><i class="tri up"></i></button></div>
          <button class="side">BUY</button></div>
        ${quote(c.bid)}${quote(c.ask)}
      </div>
    </div>
  </section>`).join('');
```
